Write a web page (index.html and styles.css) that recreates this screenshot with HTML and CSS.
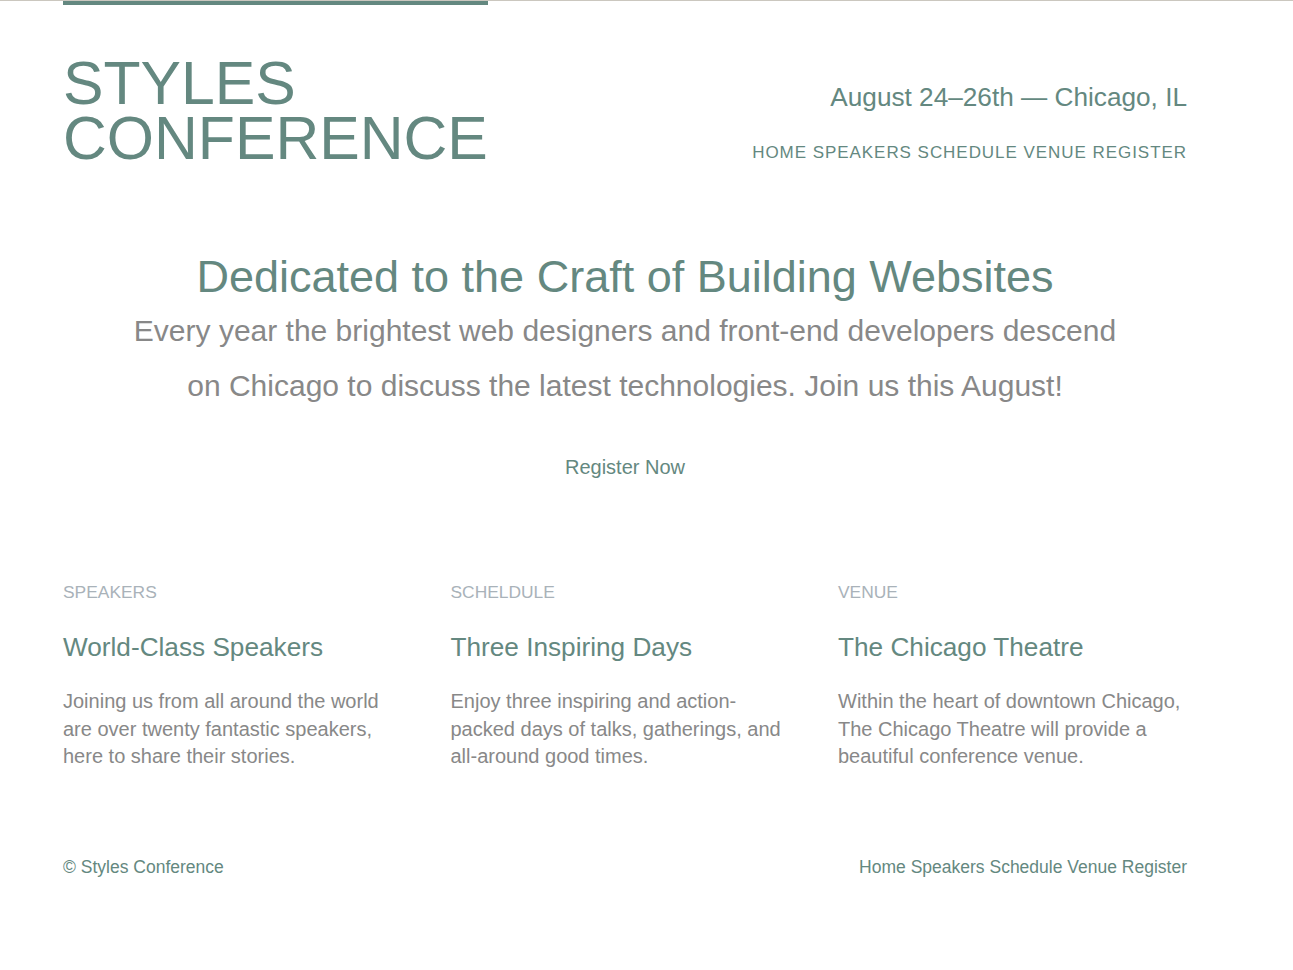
FILE: index.html
```html
<!DOCTYPE html>
<html lang="en">
<head>
<meta charset="utf-8">
<title>Styles Conference</title>
<link rel="stylesheet" href="styles.css">
</head>
<body>
<header class="site-header container">
  <h1 class="logo">STYLES<br>CONFERENCE</h1>
  <div class="header-info">
    <p class="date">August 24–26th — Chicago, IL</p>
    <nav class="main-nav">
      <a href="#">HOME</a> <a href="#">SPEAKERS</a> <a href="#">SCHEDULE</a> <a href="#">VENUE</a> <a href="#">REGISTER</a>
    </nav>
  </div>
</header>

<section class="hero container">
  <h2 class="hero-title">Dedicated to the Craft of Building Websites</h2>
  <p class="hero-text">Every year the brightest web designers and front-end developers descend on Chicago to discuss the latest technologies. Join us this August!</p>
  <a class="hero-cta" href="#">Register Now</a>
</section>

<section class="features container">
  <div class="feature">
    <h5 class="feature-label">SPEAKERS</h5>
    <h3 class="feature-title">World-Class Speakers</h3>
    <p class="feature-text">Joining us from all around the world are over twenty fantastic speakers, here to share their stories.</p>
  </div>
  <div class="feature">
    <h5 class="feature-label">SCHELDULE</h5>
    <h3 class="feature-title">Three Inspiring Days</h3>
    <p class="feature-text">Enjoy three inspiring and action-packed days of talks, gatherings, and all-around good times.</p>
  </div>
  <div class="feature">
    <h5 class="feature-label">VENUE</h5>
    <h3 class="feature-title">The Chicago Theatre</h3>
    <p class="feature-text">Within the heart of downtown Chicago, The Chicago Theatre will provide a beautiful conference venue.</p>
  </div>
</section>

<footer class="site-footer container">
  <small class="copyright">© Styles Conference</small>
  <nav class="footer-nav">
    <a href="#">Home</a> <a href="#">Speakers</a> <a href="#">Schedule</a> <a href="#">Venue</a> <a href="#">Register</a>
  </nav>
</footer>
</body>
</html>
```

FILE: styles.css
```css
html, body {
  margin: 0;
  padding: 0;
  background: #fff;
}
body {
  border-top: 1px solid #cbc7bf;
  font-family: "Liberation Sans", Arial, sans-serif;
  color: #888;
}
a {
  color: #648880;
  text-decoration: none;
}
.container {
  margin-left: 63px;
  width: 1124px;
}

/* header */
.site-header {
  display: flex;
  justify-content: space-between;
  align-items: flex-start;
}
.logo {
  margin: 0;
  border-top: 4px solid #648880;
  padding-top: 51px;
  font-size: 60.7px;
  line-height: 55px;
  font-weight: 400;
  color: #648880;
}
.header-info {
  margin-top: 81px;
  text-align: right;
}
.date {
  margin: 0;
  font-size: 26.2px;
  line-height: 31px;
  color: #648880;
}
.main-nav {
  margin-top: 29px;
  font-size: 17px;
  line-height: 22px;
  letter-spacing: 0.95px;
}

/* hero */
.hero {
  text-align: center;
  margin-top: 86px;
}
.hero-title {
  margin: 0;
  font-size: 45px;
  line-height: 50px;
  font-weight: 400;
  color: #648880;
}
.hero-text {
  max-width: 995px;
  margin: 1px auto 0;
  font-size: 30px;
  line-height: 55px;
  color: #888;
}
.hero-cta {
  display: inline-block;
  margin-top: 42px;
  font-size: 20px;
  line-height: 24px;
}

/* features */
.features {
  display: grid;
  grid-template-columns: repeat(3, 349px);
  column-gap: 38.5px;
  margin-top: 102px;
}
.feature-label {
  margin: 0;
  font-size: 17.4px;
  line-height: 22px;
  font-weight: 400;
  color: #a9b2b9;
}
.feature-title {
  margin: 29px 0 0;
  font-size: 26.2px;
  line-height: 31px;
  font-weight: 400;
  color: #648880;
}
.feature-text {
  margin: 25px 0 0;
  font-size: 20px;
  line-height: 27.5px;
  color: #888;
}

/* footer */
.site-footer {
  display: flex;
  justify-content: space-between;
  align-items: baseline;
  margin-top: 85px;
  padding-bottom: 80px;
  font-size: 17.5px;
  line-height: 22px;
}
.copyright {
  font-size: 17.5px;
  color: #648880;
}
```
